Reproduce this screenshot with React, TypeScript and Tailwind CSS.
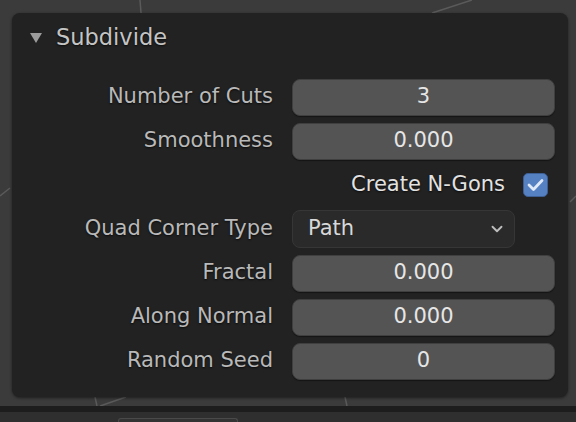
import { ChevronDown } from 'lucide-react'

const font = "font-['DejaVu_Sans','Liberation_Sans',sans-serif]"
const shadow = '[text-shadow:0_1px_2px_rgba(0,0,0,0.7)]'

function NumberField({ value }: { value: string }) {
  return (
    <div className="h-[37px] w-[263px] rounded-[8px] bg-[#545454] border border-[#3f3f3f] shadow-[0_1px_1px_rgba(0,0,0,0.4)] flex items-center justify-center text-[21px] text-[#e6e6e6]">
      {value}
    </div>
  )
}

function Row({ label, children }: { label?: string; children: React.ReactNode }) {
  return (
    <div className="h-[44px] flex items-center">
      <div className={`w-[261px] text-right text-[21px] text-[#b9b9b9] ${shadow}`}>{label}</div>
      <div className="ml-[19px] flex-1 flex items-center">{children}</div>
    </div>
  )
}

export default function App() {
  return (
    <div className={`relative w-[576px] h-[422px] bg-[#3b3b3b] overflow-hidden flex flex-col ${font}`}>
      {/* viewport edges behind the panel */}
      <svg className="absolute inset-0" width="576" height="422">
        <g stroke="#5a5a5a" strokeWidth="1.5" fill="none">
          <line x1="140" y1="0" x2="141" y2="13" />
          <line x1="432" y1="13" x2="472" y2="0" />
          <line x1="95" y1="397" x2="97" y2="406" />
          <line x1="100" y1="406" x2="126" y2="397" />
          <line x1="345" y1="397" x2="347" y2="406" />
          <line x1="0" y1="196" x2="10" y2="188" />
          <line x1="570" y1="202" x2="576" y2="196" />
        </g>
      </svg>

      <div className="relative flex-1 pt-[13px] pl-[12px] pr-[8px] pb-[9px]">
        <div className="h-[384px] rounded-[8px] bg-[#222222] shadow-[0_1px_3px_rgba(0,0,0,0.5)] flex flex-col">
          {/* Header */}
          <div className="h-[50px] flex items-center pl-[18px]">
            <svg width="12" height="11" viewBox="0 0 12 11" className="mr-[14px]">
              <polygon points="0,0 12,0 6,10" fill="#9c9c9c" />
            </svg>
            <span className={`text-[22.5px] text-[#c4c4c4] ${shadow}`}>Subdivide</span>
          </div>

          <div className="mt-[12px] flex flex-col">
            <Row label="Number of Cuts">
              <NumberField value="3" />
            </Row>
            <Row label="Smoothness">
              <NumberField value="0.000" />
            </Row>
            <Row>
              <div className="w-[256px] flex items-center justify-end">
                <span className={`text-[21px] text-[#e2e2e2] mr-[18px] ${shadow}`}>Create N-Gons</span>
                <div className="w-[25px] h-[24px] rounded-[5px] bg-[#5580c1] border border-[#3d5f94] flex items-center justify-center">
                  <svg width="17" height="14" viewBox="0 0 17 14">
                    <polyline points="2,7 6.5,11.5 15,2.5" fill="none" stroke="#dfe8f7" strokeWidth="2.8" strokeLinecap="round" strokeLinejoin="round" />
                  </svg>
                </div>
              </div>
            </Row>
            <Row label="Quad Corner Type">
              <div className="h-[38px] w-[223px] rounded-[8px] bg-[#2a2a2a] border border-[#363636] flex items-center justify-between pl-[15px] pr-[8px] text-[21px] text-[#d8d8d8]">
                <span>Path</span>
                <ChevronDown size={18} strokeWidth={2.5} className="text-[#bdbdbd]" />
              </div>
            </Row>
            <Row label="Fractal">
              <NumberField value="0.000" />
            </Row>
            <Row label="Along Normal">
              <NumberField value="0.000" />
            </Row>
            <Row label="Random Seed">
              <NumberField value="0" />
            </Row>
          </div>
        </div>
      </div>

      <div className="relative h-[6px] bg-[#1d1d1d]" />
      <div className="relative h-[10px] bg-[#2f2f2f] flex items-end pl-[118px]">
        <div className="w-[120px] h-[4px] border-t border-x border-[#4a4a4a] rounded-t-[3px] bg-[#333333]" />
      </div>
    </div>
  )
}
